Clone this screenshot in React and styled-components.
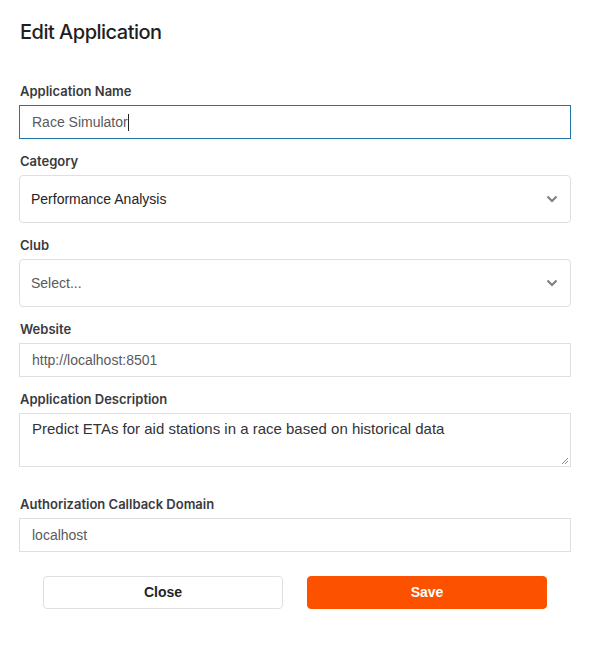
import React from "react";
import styled, { createGlobalStyle } from "styled-components";

const GlobalStyle = createGlobalStyle`
  body {
    margin: 0;
    background: #ffffff;
    font-family: Inter, "Liberation Sans", Arial, sans-serif;
    color: #242428;
  }
`;

function Chevron() {
  return (
    <svg width="12" height="8" viewBox="0 0 12 8">
      <path d="M1.5 1.5 L6 6 L10.5 1.5" fill="none" stroke="#7d7d80" strokeWidth="2" />
    </svg>
  );
}

function App() {
  return (
    <>
      <GlobalStyle />
      <Modal>
        <Title>Edit Application</Title>
        <Form>
          <Field>
            <Label>Application Name</Label>
            <TextBox $focused>
              Race Simulator
              <Caret />
            </TextBox>
          </Field>
          <Field>
            <Label>Category</Label>
            <SelectBox>
              <SelectValue>Performance Analysis</SelectValue>
              <Chevron />
            </SelectBox>
          </Field>
          <Field>
            <Label>Club</Label>
            <SelectBox>
              <SelectValue $placeholder>Select...</SelectValue>
              <Chevron />
            </SelectBox>
          </Field>
          <Field>
            <Label>Website</Label>
            <TextBox>http://localhost:8501</TextBox>
          </Field>
          <Field $spaced>
            <Label>Application Description</Label>
            <TextArea>
              Predict ETAs for aid stations in a race based on historical data
              <Grip viewBox="0 0 8 8" width="8" height="8">
                <path d="M7 1 L1 7 M7 4 L4 7" stroke="#8a8a8a" strokeWidth="1" />
              </Grip>
            </TextArea>
          </Field>
          <Field>
            <Label>Authorization Callback Domain</Label>
            <TextBox>localhost</TextBox>
          </Field>
        </Form>
        <Actions>
          <Button>Close</Button>
          <Button $primary>Save</Button>
        </Actions>
      </Modal>
    </>
  );
}

export default App;

const Modal = styled.div`
  width: 589px;
  height: 651px;
  box-sizing: border-box;
  padding: 18px 18px 0 19px;
`;

const Title = styled.h2`
  margin: 0 0 0 1px;
  font-size: 20px;
  font-weight: 500;
  letter-spacing: -0.5px;
  line-height: 28px;
  color: #1f1f22;
`;

const Form = styled.div`
  display: flex;
  flex-direction: column;
  margin-top: 37px;
`;

const Field = styled.div`
  display: flex;
  flex-direction: column;
  margin-bottom: ${(p) => (p.$spaced ? "29px" : "14px")};
`;

const Label = styled.label`
  font-size: 13px;
  font-weight: 600;
  line-height: 16px;
  color: #3a3a3e;
  margin: 0 0 6px 1px;
`;

const TextBox = styled.div`
  position: relative;
  display: flex;
  align-items: center;
  height: 34px;
  box-sizing: border-box;
  padding: 0 12px;
  border: 1px solid ${(p) => (p.$focused ? "#1f77a6" : "#dfdfe3")};
  font-family: "Liberation Sans", Arial, sans-serif;
  font-size: 14px;
  color: #5a5a5e;
`;

const Caret = styled.span`
  display: inline-block;
  width: 1px;
  height: 17px;
  background: #222;
`;

const SelectBox = styled.div`
  display: flex;
  align-items: center;
  justify-content: space-between;
  height: 48px;
  box-sizing: border-box;
  padding: 0 12px 1px 11px;
  border: 1px solid #dfdfe3;
  border-radius: 4px;
`;

const SelectValue = styled.span`
  font-family: "Liberation Sans", Arial, sans-serif;
  font-size: 14px;
  color: ${(p) => (p.$placeholder ? "#5a5a5e" : "#242428")};
`;

const TextArea = styled.div`
  position: relative;
  height: 54px;
  box-sizing: border-box;
  padding: 5px 12px;
  border: 1px solid #dfdfe3;
  font-family: "Liberation Sans", Arial, sans-serif;
  font-size: 15px;
  line-height: 20px;
  color: #333336;
`;

const Grip = styled.svg`
  position: absolute;
  right: 1px;
  bottom: 1px;
`;

const Actions = styled.div`
  display: flex;
  justify-content: center;
  gap: 24px;
  padding-top: 10px;
`;

const Button = styled.button`
  width: 240px;
  height: 33px;
  border-radius: 4px;
  border: 1px solid ${(p) => (p.$primary ? "#fc5200" : "#dfdfe3")};
  background: ${(p) => (p.$primary ? "#fc5200" : "#ffffff")};
  color: ${(p) => (p.$primary ? "#ffffff" : "#242428")};
  font-family: "Liberation Sans", Arial, sans-serif;
  font-size: 14px;
  font-weight: 700;
  padding: 0 0 1px;
  cursor: pointer;
`;
